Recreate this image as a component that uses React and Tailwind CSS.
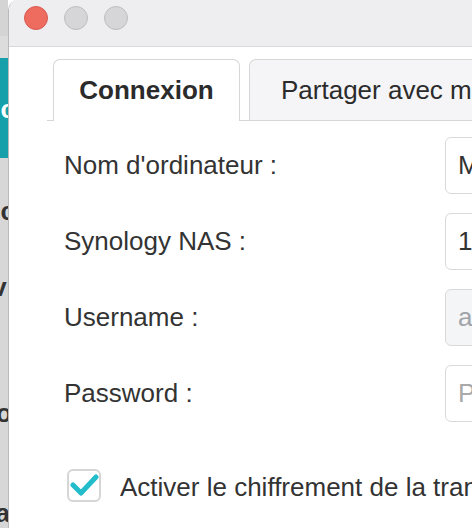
import React from "react";

export default function App() {
  const font = { fontFamily: '"Liberation Sans", Arial, Helvetica, sans-serif' };
  return (
    <div className="flex w-[472px] h-[528px] overflow-hidden bg-white text-[#333333]" style={font}>
      {/* background app strip */}
      <div className="w-[8px] shrink-0 flex flex-col overflow-hidden bg-[#d6d6d6]">
        <div className="h-[36px] bg-[#d4d4d4]" />
        <div className="h-[22px] bg-[#dcdcdc]" />
        <div className="h-[100px] bg-[#16a1aa] flex items-center justify-end overflow-hidden">
          <span className="text-[26px] font-bold text-white whitespace-nowrap mr-[-7px] mt-[2px]">ic</span>
        </div>
        <div className="flex-1 relative bg-[#d7d7d7] text-[26px] font-bold text-[#333]">
          <div className="h-[40px]" />
          <div className="h-[26px] flex items-center justify-end overflow-hidden"><span className="whitespace-nowrap mr-[-7px]">ic</span></div>
          <div className="h-[50px]" />
          <div className="h-[26px] flex items-center justify-end overflow-hidden"><span className="whitespace-nowrap mr-[-6px]">vi</span></div>
          <div className="h-[100px]" />
          <div className="h-[26px] flex items-center justify-end overflow-hidden"><span className="whitespace-nowrap mr-[-4px]">o</span></div>
          <div className="h-[74px]" />
          <div className="h-[26px] flex items-center justify-end overflow-hidden"><span className="whitespace-nowrap mr-[-2px]">a</span></div>
        </div>
      </div>

      {/* window */}
      <div className="flex-1 flex flex-col rounded-tl-[10px] overflow-hidden border-l border-[#b9b9b9] bg-white">
        <div className="h-[47px] shrink-0 bg-[#eeedf0] border-b border-[#d9d9d9] flex items-start gap-[16px] pl-[15px] pt-[6px]">
          <div className="w-[24px] h-[24px] rounded-full bg-[#ee6b5f] border border-[#d85a4f]" />
          <div className="w-[24px] h-[24px] rounded-full bg-[#d6d5d8] border border-[#bdbcbf]" />
          <div className="w-[24px] h-[24px] rounded-full bg-[#d6d5d8] border border-[#bdbcbf]" />
        </div>

        <div className="flex-1 flex flex-col overflow-hidden">
          {/* tabs */}
          <div className="mt-[12px] ml-[38px] flex border-b border-[#d6d6d6] whitespace-nowrap">
            <div className="ml-[6px] w-[187px] h-[62px] mb-[-1px] shrink-0 relative bg-white border border-b-0 border-[#d6d6d6] rounded-t-[7px] flex items-center justify-center font-bold text-[26px] text-[#2b2b2b]">
              Connexion
            </div>
            <div className="ml-[9px] h-[61px] w-[300px] shrink-0 bg-[#f5f5f7] border border-b-0 border-[#d6d6d6] rounded-t-[7px] flex items-center pl-[31px] text-[26px] text-[#2b2b2b]">
              Partager avec mes contacts
            </div>
          </div>

          {/* form */}
          <div className="mt-[16px] pl-[55px] flex flex-col gap-[19px] text-[26px]">
            {[
              { label: "Nom d'ordinateur :", value: "MacBook-Pro", cls: "bg-white text-[#333]" },
              { label: "Synology NAS :", value: "192.168.1.20", cls: "bg-white text-[#333]" },
              { label: "Username :", value: "admin", cls: "bg-[#f4f5f7] text-[#a0a4aa]" },
              { label: "Password :", value: "Password", cls: "bg-white text-[#a9a9a9]" },
            ].map((r) => (
              <div key={r.label} className="flex items-center h-[57px]">
                <div className="w-[381px] shrink-0 whitespace-nowrap">{r.label}</div>
                <div className={`w-[200px] h-[57px] shrink-0 border border-[#d9d9d9] rounded-[6px] pl-[12px] flex items-center whitespace-nowrap ${r.cls}`}>
                  {r.value}
                </div>
              </div>
            ))}
          </div>

          {/* checkbox */}
          <div className="mt-[41px] pl-[58px] flex items-center gap-[19px] text-[26px] whitespace-nowrap">
            <div className="w-[34px] h-[33px] shrink-0 rounded-[6px] border-2 border-[#d6d6d6] bg-white flex items-center justify-center">
              <svg width="30" height="30" viewBox="0 0 30 30">
                <path d="M4 19 L12 27 L27 11" fill="none" stroke="#22bccb" strokeWidth="5" strokeLinecap="round" strokeLinejoin="round" transform="translate(0,-4)" />
              </svg>
            </div>
            <span className="mt-[5px]">Activer le chiffrement de la transmission</span>
          </div>
        </div>
      </div>
    </div>
  );
}
